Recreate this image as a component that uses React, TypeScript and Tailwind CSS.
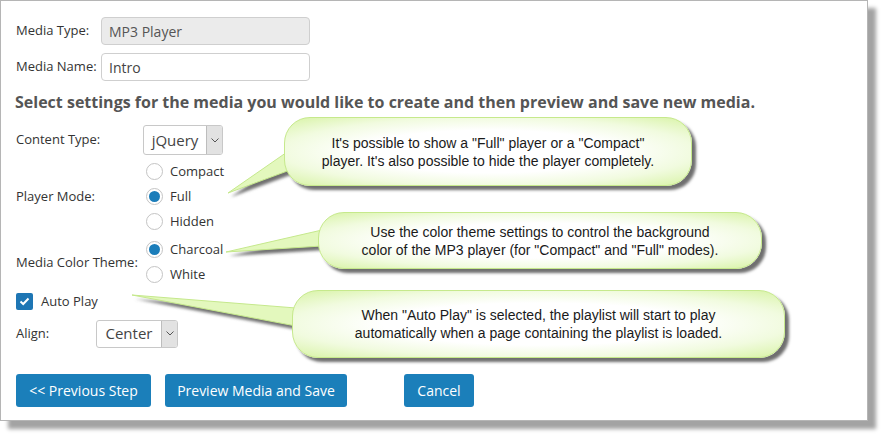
import * as React from 'react';

const Radio = ({ checked, label }: { checked?: boolean; label: string }) => (
    <div className="flex items-center h-[25px]">
        <span className="w-[17px] h-[17px] rounded-full border border-[#c4c4c4] bg-white flex items-center justify-center">
            {checked && <span className="w-[11px] h-[11px] rounded-full bg-[#1b7dba]" />}
        </span>
        <span className="ml-[7px] text-[13px] text-[#333]">{label}</span>
    </div>
);

const Select = ({ value, width, height }: { value: string; width: string; height: string }) => (
    <div className={`flex ${width} ${height} border border-[#c8c8c8] rounded-[3px] bg-white overflow-hidden`}>
        <div className="flex-1 flex items-center justify-center text-[15px] text-[#444]">{value}</div>
        <div className="w-[16px] bg-[#e2e2e2] border-l border-[#bdbdbd] flex items-center justify-center">
            <svg width="8" height="5" viewBox="0 0 8 5"><path d="M0.5 0.5 L4 4 L7.5 0.5" fill="none" stroke="#555" strokeWidth="1" /></svg>
        </div>
    </div>
);

const Bubble = ({ className, lines }: { className: string; lines: string[] }) => (
    <div className={`absolute flex flex-col items-center justify-center rounded-[26px] border border-[#c6e98c] bg-[radial-gradient(ellipse_at_center,#ffffff_45%,#f1fbdf_72%,#d8f3a6_100%)] shadow-[4px_4px_3px_#6f6f6f] text-[14px] leading-[18px] text-[#1a1a1a] font-['Liberation_Sans',Arial,sans-serif] ${className}`}>
        {lines.map((l) => <div key={l}>{l}</div>)}
    </div>
);

export default function App() {
    return (
        <div className="relative w-[893px] h-[446px] bg-white overflow-hidden font-['Open_Sans',sans-serif]">
            <div className="w-[868px] h-[421px] border border-[#b5b5b5] bg-white shadow-[8px_8px_4px_#a3a3a3] pl-[15px] pt-[16px]">
                <div className="flex items-center">
                    <span className="w-[85px] text-[13px] text-[#333]">Media Type:</span>
                    <div className="w-[209px] h-[28px] rounded-[4px] border border-[#cfcfcf] bg-[#ebebeb] flex items-center px-[7px] text-[14px] text-[#555]">MP3 Player</div>
                </div>
                <div className="flex items-center mt-[8px]">
                    <span className="w-[85px] text-[13px] text-[#333]">Media Name:</span>
                    <div className="w-[209px] h-[28px] rounded-[4px] border border-[#cfcfcf] bg-white flex items-center px-[7px] text-[14px] text-[#444]">Intro</div>
                </div>
                <div className="mt-[10px] -ml-[1px] text-[16px] leading-[22px] font-bold text-[#555]">
                    Select settings for the media you would like to create and then preview and save new media.
                </div>
                <div className="flex items-center mt-[12px]">
                    <span className="w-[127px] text-[13px] text-[#333]">Content Type:</span>
                    <Select value="jQuery" width="w-[80px]" height="h-[30px]" />
                </div>
                <div className="flex items-center mt-[4px]">
                    <span className="w-[130px] text-[13px] text-[#333]">Player Mode:</span>
                    <div className="flex flex-col">
                        <Radio label="Compact" />
                        <Radio checked label="Full" />
                        <Radio label="Hidden" />
                    </div>
                </div>
                <div className="flex items-center mt-[3px]">
                    <span className="w-[130px] text-[13px] text-[#333] pt-[1px]">Media Color Theme:</span>
                    <div className="flex flex-col">
                        <Radio checked label="Charcoal" />
                        <Radio label="White" />
                    </div>
                </div>
                <div className="flex items-center mt-[5px]">
                    <span className="w-[17px] h-[17px] rounded-[2px] bg-[#1e76b4] flex items-center justify-center">
                        <svg width="11" height="9" viewBox="0 0 11 9"><path d="M1.5 4.5 L4.2 7 L9.5 1.5" fill="none" stroke="#fff" strokeWidth="2" /></svg>
                    </span>
                    <span className="ml-[8px] text-[13px] text-[#333]">Auto Play</span>
                </div>
                <div className="flex items-center mt-[8px]">
                    <span className="w-[80px] text-[13px] text-[#333]">Align:</span>
                    <Select value="Center" width="w-[82px]" height="h-[28px]" />
                </div>
                <div className="flex mt-[26px] text-[14px] text-white">
                    <button className="h-[33px] w-[135px] rounded-[3px] bg-[#1b7fba]">&lt;&lt; Previous Step</button>
                    <button className="h-[33px] w-[182px] ml-[14px] rounded-[3px] bg-[#1b7fba]">Preview Media and Save</button>
                    <button className="h-[33px] w-[70px] ml-[57px] rounded-[3px] bg-[#1b7fba]">Cancel</button>
                </div>
            </div>

            <svg className="absolute left-0 top-0" width="893" height="446">
                <defs>
                    <filter id="ps" x="-20%" y="-50%" width="140%" height="200%">
                        <feGaussianBlur stdDeviation="1.5" />
                    </filter>
                </defs>
                <g fill="#6f6f6f" filter="url(#ps)" transform="translate(3,4)">
                    <polygon points="228,193 290,150 290,170" />
                    <polygon points="226,252 322,230 322,246" />
                    <polygon points="132,295 296,308 296,326" />
                </g>
                <g fill="#e3f8bd" stroke="#c5e88c" strokeWidth="1">
                    <polygon points="228,193 290,150 290,170" />
                    <polygon points="226,252 322,230 322,246" />
                    <polygon points="132,295 296,308 296,326" />
                </g>
            </svg>

            <Bubble className="left-[284px] top-[117px] w-[408px] h-[69px]" lines={["It's possible to show a \"Full\" player or a \"Compact\"", "player. It's also possible to hide the player completely."]} />
            <Bubble className="left-[318px] top-[212px] w-[444px] h-[57px]" lines={["Use the color theme settings to control the background", "color of the MP3 player (for \"Compact\" and \"Full\" modes)."]} />
            <Bubble className="left-[292px] top-[290px] w-[493px] h-[68px]" lines={["When \"Auto Play\" is selected, the playlist will start to play", "automatically when a page containing the playlist is loaded."]} />
        </div>
    );
}
